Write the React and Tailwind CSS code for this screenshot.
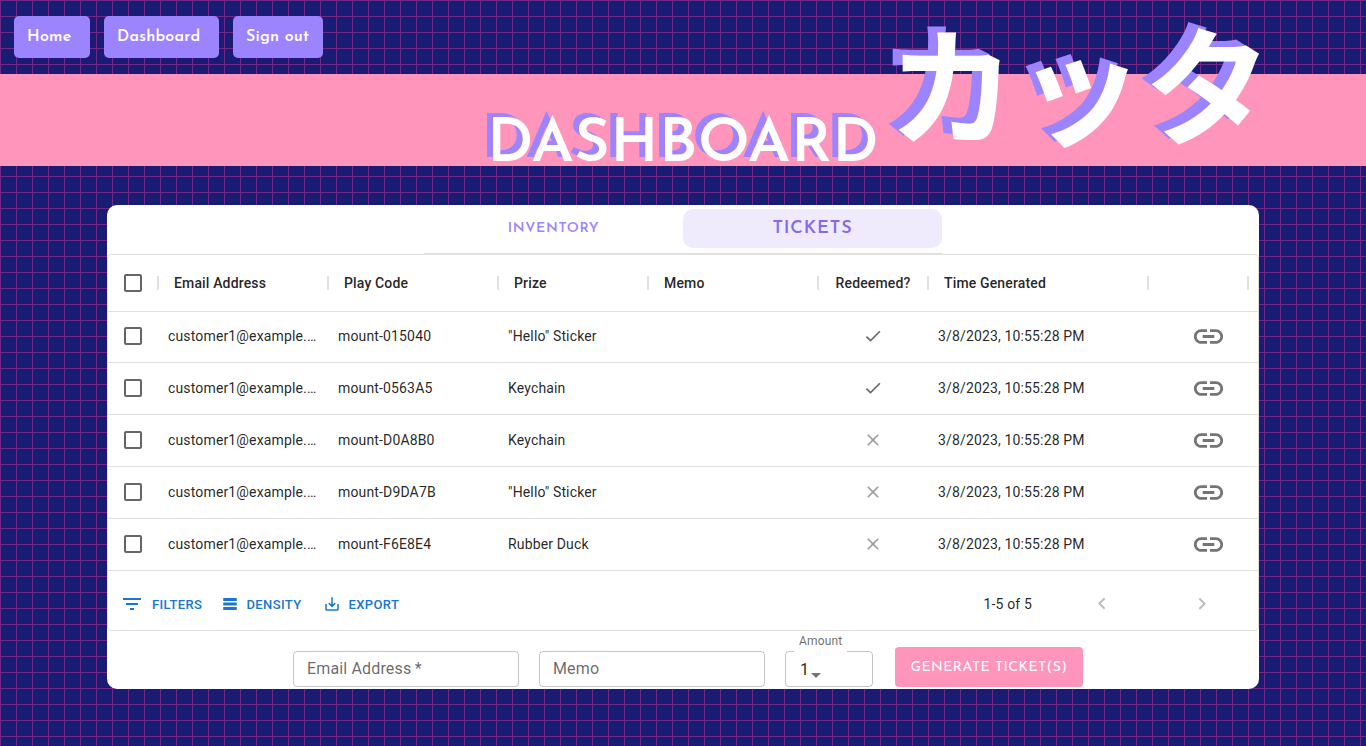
import React from "react";

const JOSEFIN = "font-['Josefin_Sans',Lato,sans-serif]";

const ROWS = [
  { code: "mount-015040", prize: '"Hello" Sticker', redeemed: true },
  { code: "mount-0563A5", prize: "Keychain", redeemed: true },
  { code: "mount-D0A8B0", prize: "Keychain", redeemed: false },
  { code: "mount-D9DA7B", prize: '"Hello" Sticker', redeemed: false },
  { code: "mount-F6E8E4", prize: "Rubber Duck", redeemed: false },
];

const GRID =
  "grid grid-cols-[50px_170px_170px_150px_170px_110px_220px_100px_1fr] items-center";

function Icon({ d, className }) {
  return (
    <svg viewBox="0 0 24 24" fill="currentColor" className={`shrink-0 ${className}`}>
      <path d={d} />
    </svg>
  );
}

const ICONS = {
  box: "M19 5v14H5V5h14m0-2H5c-1.1 0-2 .9-2 2v14c0 1.1.9 2 2 2h14c1.1 0 2-.9 2-2V5c0-1.1-.9-2-2-2z",
  check: "M9 16.17L4.83 12l-1.42 1.41L9 19 21 7l-1.41-1.41z",
  close:
    "M19 6.41L17.59 5 12 10.59 6.41 5 5 6.41 10.59 12 5 17.59 6.41 19 12 13.41 17.59 19 19 17.59 13.41 12z",
  link: "M3.9 12c0-1.71 1.39-3.1 3.1-3.1h4V7H7c-2.76 0-5 2.24-5 5s2.24 5 5 5h4v-1.9H7c-1.71 0-3.1-1.39-3.1-3.1zM8 13h8v-2H8v2zm9-6h-4v1.9h4c1.71 0 3.1 1.39 3.1 3.1s-1.39 3.1-3.1 3.1h-4V17h4c2.76 0 5-2.24 5-5s-2.24-5-5-5z",
  filter: "M10 18h4v-2h-4v2zM3 6v2h18V6H3zm3 7h12v-2H6v2z",
  rows: "M21 8H3V4h18v4zm0 2H3v4h18v-4zm0 6H3v4h18v-4z",
  save: "M19 12v7H5v-7H3v7c0 1.1.9 2 2 2h14c1.1 0 2-.9 2-2v-7h-2zm-6 .67l2.59-2.58L17 11.5l-5 5-5-5 1.41-1.41L11 12.67V3h2z",
  left: "M15.41 16.09l-4.58-4.59 4.58-4.59L14 5.5l-6 6 6 6z",
  right: "M8.59 16.34l4.58-4.59-4.58-4.59L10 5.75l6 6-6 6z",
  arrow: "M7 10l5 5 5-5z",
};

function NavButton({ children, className }) {
  return (
    <button
      className={`h-[42px] rounded-[5px] bg-[#9d84ff] pl-[13px] text-left text-base leading-none font-semibold tracking-[0.22px] text-white ${JOSEFIN} ${className}`}
    >
      {children}
    </button>
  );
}

function HeaderCell({ children, className = "px-4" }) {
  return (
    <div className="flex h-full items-center justify-between">
      <div className={`flex-1 whitespace-nowrap ${className}`}>{children}</div>
      <div className="-mr-px h-3.5 w-0.5 bg-[#e0e0e0]" />
    </div>
  );
}

function Checkbox() {
  return (
    <div className="flex justify-center">
      <Icon d={ICONS.box} className="size-6 text-black/60" />
    </div>
  );
}

function Row({ row }) {
  return (
    <div className={`${GRID} h-[52px] border-b border-[#e0e0e0] pb-px`}>
      <Checkbox />
      <div className="truncate px-2.5">customer1@example.com</div>
      <div className="px-2.5">{row.code}</div>
      <div className="px-2.5">{row.prize}</div>
      <div />
      <div className="flex justify-center">
        <Icon
          d={row.redeemed ? ICONS.check : ICONS.close}
          className={row.redeemed ? "size-5 text-black/60" : "size-5 text-black/38"}
        />
      </div>
      <div className="px-2.5 whitespace-nowrap">3/8/2023, 10:55:28 PM</div>
      <div className="flex justify-center pt-px pl-[21px]">
        <Icon d={ICONS.link} className="size-[35px] text-black/54" />
      </div>
    </div>
  );
}

function ToolButton({ icon, iconClass, children, className }) {
  return (
    <button className={`flex items-center text-[13px] font-medium tracking-[0.37px] ${className}`}>
      <Icon d={icon} className={iconClass} />
      <span className="pt-0.5">{children}</span>
    </button>
  );
}

export default function App() {
  return (
    <div className="h-[746px] w-full overflow-hidden bg-[#1a1c74] bg-[linear-gradient(#702a86_1px,transparent_1px),linear-gradient(90deg,#702a86_1px,transparent_1px)] bg-[size:16px_16px] font-[Roboto,sans-serif] text-sm tracking-[0.15px] text-black/87">
      <nav className="flex h-[74px] gap-3.5 pt-4 pl-3.5">
        <NavButton className="w-[76px]">Home</NavButton>
        <NavButton className="w-[115px]">Dashboard</NavButton>
        <NavButton className="w-[90px]">Sign out</NavButton>
      </nav>

      <header className="flex h-[92px] bg-[#ff95bb] pl-[487px] whitespace-nowrap">
        <h1
          className={`w-[401px] pt-[40px] text-[61px] leading-[64px] font-[650] tracking-[0.45px] text-white [text-shadow:-6px_-4px_0_#9d84ff] ${JOSEFIN}`}
        >
          DASHBOARD
        </h1>
        <div className="-mt-[57px] h-[128px] font-['Noto_Sans_CJK_JP',sans-serif] text-[128px] leading-[128px] font-bold tracking-normal text-white [text-shadow:-10px_-6px_0_#9d84ff]">
          カッタ
        </div>
      </header>

      <main className="mx-auto mt-[39px] h-[484px] w-[1152px] rounded-[10px] bg-white">
        <div className={`mx-auto flex h-[49px] w-[518px] border-b border-[#e0e0e0] pt-1 ${JOSEFIN}`}>
          <div className="flex h-[39px] w-[259px] items-center justify-center pt-px text-sm font-semibold tracking-[0.65px] text-[#9d84ff]">
            INVENTORY
          </div>
          <div className="flex h-[39px] w-[259px] items-center justify-center rounded-[10px] bg-[#efebfd] pt-px text-lg font-semibold tracking-[0.9px] text-[#8468ee]">
            TICKETS
          </div>
        </div>

        <section className="h-[377px] rounded border border-[#e0e0e0]">
          <div className={`${GRID} -mb-px h-[57px] border-b border-[#e0e0e0] font-medium`}>
            <HeaderCell className="">
              <Checkbox />
            </HeaderCell>
            <HeaderCell>Email Address</HeaderCell>
            <HeaderCell>Play Code</HeaderCell>
            <HeaderCell>Prize</HeaderCell>
            <HeaderCell>Memo</HeaderCell>
            <HeaderCell className="pl-px text-center">Redeemed?</HeaderCell>
            <HeaderCell>Time Generated</HeaderCell>
            <HeaderCell />
          </div>
          {ROWS.map((row) => (
            <Row key={row.code} row={row} />
          ))}
          <div className="flex h-[59px] items-center pt-2 pb-px pl-3">
            <div className="flex flex-1 text-[#1976d2]">
              <ToolButton icon={ICONS.filter} iconClass="size-6 mr-2" className="w-[101px]">
                FILTERS
              </ToolButton>
              <ToolButton icon={ICONS.rows} iconClass="size-[18px] mr-[7.5px]" className="w-[102px]">
                DENSITY
              </ToolButton>
              <ToolButton icon={ICONS.save} iconClass="size-[18px] mr-[7.5px]" className="">
                EXPORT
              </ToolButton>
            </div>
            <div className="flex items-center pr-[44px]">
              <span className="mr-[58px]">1-5 of 5</span>
              <Icon d={ICONS.left} className="mr-[76px] size-6 text-black/26" />
              <Icon d={ICONS.right} className="size-6 text-black/26" />
            </div>
          </div>
        </section>

        <form className="flex pt-4 pl-[186px] text-base tracking-[0.15px]">
          <div className="mt-1 flex h-9 w-[226px] items-center rounded border border-black/23 px-[13px] text-black/60">
            Email Address&thinsp;*
          </div>
          <div className="mt-1 ml-5 flex h-9 w-[226px] items-center rounded border border-black/23 px-[13px] text-black/60">
            Memo
          </div>
          <div className="relative mt-1 ml-5 flex h-9 w-[88px] items-center rounded border border-black/23 pl-3.5">
            <span className="absolute -top-[19px] left-2 h-[19px] w-[53px] bg-white pl-[5px] text-xs leading-[17px] text-black/60 shadow-[0_1px_0_white]">
              Amount
            </span>
            <span className="pt-0.5">1</span>
            <Icon d={ICONS.arrow} className="mt-3 -ml-[5px] size-6 text-black/54" />
          </div>
          <button
            type="button"
            className={`ml-[22px] h-10 w-[188px] rounded bg-[#ff95bb] pt-px text-sm font-normal whitespace-nowrap tracking-[0.45px] text-white ${JOSEFIN}`}
          >
            GENERATE TICKET(S)
          </button>
        </form>
      </main>
    </div>
  );
}
